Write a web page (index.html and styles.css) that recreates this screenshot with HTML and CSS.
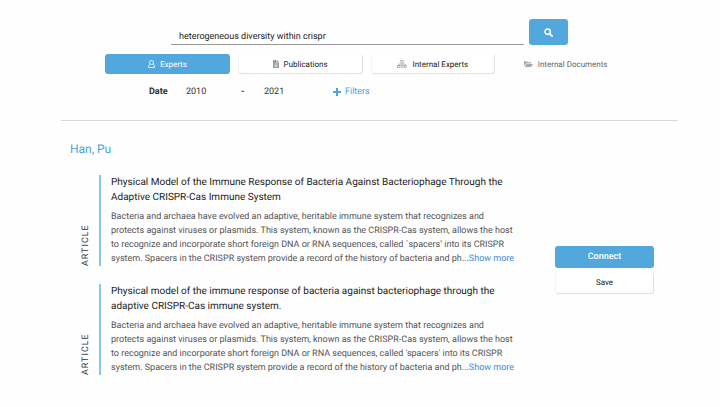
FILE: index.html
```html
<!DOCTYPE html>
<html lang="en">
<head>
    <meta charset="UTF-8">
    <meta name="viewport" content="width=device-width, initial-scale=1.0">
    <title>Expert Search</title>
    <link rel="stylesheet" href="styles.css">
</head>
<body>
    <div class="container">
        <form class="search" id="searchForm">
            <div class="search-bar">
                <input type="text" class="search-input" aria-label="Search" value="heterogeneous diversity within crispr">
                <button type="submit" class="btn btn-primary search-btn" aria-label="Search">
                    <svg width="9" height="9" viewBox="0 0 16 16" fill="none" stroke="#fff" stroke-linecap="round">
                        <circle cx="6.5" cy="6.5" r="4.8" stroke-width="2.8"/>
                        <path d="M10.5 10.5L14.3 14.3" stroke-width="3.2"/>
                    </svg>
                </button>
            </div>

            <div class="tabs">
                <button type="button" class="btn btn-primary tab">
                    <svg width="7" height="8" viewBox="0 0 14 16" fill="none" stroke="#fff" stroke-width="1.6">
                        <circle cx="7" cy="5" r="4"/>
                        <path d="M4.2 8.3C2 9 1 10.8 1 14.8H13C13 10.8 12 9 9.8 8.3"/>
                    </svg>
                    Experts
                </button>
                <button type="button" class="btn btn-outline tab">
                    <svg width="6" height="8" viewBox="0 0 12 16">
                        <path fill="#999" d="M0 0H7V5H12V16H0Z M8 0L12 4H8Z"/>
                        <path stroke="#fff" stroke-width="1.2" d="M3 8H9M3 10.5H9M3 13H9"/>
                    </svg>
                    Publications
                </button>
                <button type="button" class="btn btn-outline tab">
                    <svg width="10" height="8" viewBox="0 0 20 16" fill="none" stroke="#999" stroke-width="1.3">
                        <rect x="7.5" y="1" width="5" height="4"/>
                        <rect x="1" y="11" width="4.5" height="4"/>
                        <rect x="7.8" y="11" width="4.5" height="4"/>
                        <rect x="14.5" y="11" width="4.5" height="4"/>
                        <path d="M10 5V11M3.2 11V8H16.8V11"/>
                    </svg>
                    Internal Experts
                </button>
                <button type="button" class="btn tab tab-disabled">
                    <svg width="9" height="8" viewBox="0 0 18 16" fill="#aaa">
                        <path d="M0 2.5H5.5L7 4.5H14V7H4L0 12Z"/>
                        <path d="M4.6 8H18L14.5 14H1Z"/>
                    </svg>
                    Internal Documents
                </button>
            </div>

            <div class="filters">
                <label class="filters-label" for="dateFrom">Date</label>
                <input type="text" class="year" id="dateFrom" value="2010">
                <span class="dash">-</span>
                <input type="text" class="year" id="dateTo" aria-label="Date to" value="2021">
                <button type="button" class="filters-btn">
                    <svg width="8" height="8" viewBox="0 0 8 8" stroke="#4aa3db" stroke-width="2">
                        <path d="M4 0V8M0 4H8"/>
                    </svg>
                    Filters
                </button>
            </div>
        </form>

        <div class="result">
            <h2 class="result-name">Han, Pu</h2>
            <div class="result-body">
                <div class="articles">
                    <div class="article">
                        <span class="article-type">ARTICLE</span>
                        <div class="article-text">
                            <h3>Physical Model of the Immune Response of Bacteria Against Bacteriophage Through the Adaptive CRISPR-Cas Immune System</h3>
                            <p>Bacteria and archaea have evolved an adaptive, heritable immune system that recognizes and protects against viruses or plasmids. This system, known as the CRISPR-Cas system, allows the host to recognize and incorporate short foreign DNA or RNA sequences, called `spacers’ into its CRISPR system. Spacers in the CRISPR system provide a record of the history of bacteria and ph...<a href="#">Show more</a></p>
                        </div>
                    </div>
                    <div class="article">
                        <span class="article-type">ARTICLE</span>
                        <div class="article-text">
                            <h3>Physical model of the immune response of bacteria against bacteriophage through the adaptive CRISPR-Cas immune system.</h3>
                            <p>Bacteria and archaea have evolved an adaptive, heritable immune system that recognizes and protects against viruses or plasmids. This system, known as the CRISPR-Cas system, allows the host to recognize and incorporate short foreign DNA or RNA sequences, called 'spacers' into its CRISPR system. Spacers in the CRISPR system provide a record of the history of bacteria and ph...<a href="#">Show more</a></p>
                        </div>
                    </div>
                </div>
                <div class="actions">
                    <button type="button" class="btn btn-primary connect">Connect</button>
                    <button type="button" class="btn btn-outline">Save</button>
                </div>
            </div>
        </div>
    </div>
</body>
</html>
```
FILE: styles.css
```css
* {
    box-sizing: border-box;
}

body {
    margin: 0;
    font-family: Roboto, Arial, sans-serif;
    font-size: 9px;
    color: #333;
    background-color: #fefefe;
    text-rendering: geometricPrecision;
}

button,
input {
    font-family: inherit;
    font-size: inherit;
    color: inherit;
    text-rendering: inherit;
    border: none;
    background: none;
    padding: 0;
}

.container {
    margin: 0 42px 0 61px;
}

.search {
    padding: 19px 50px 20px 44px;
    border-bottom: 1px solid #d8d8d8;
}

.search-bar {
    display: flex;
    align-items: flex-end;
    gap: 5px;
    padding: 0 60px 0 66px;
}

.search-input {
    flex: 1;
    min-width: 0;
    height: 18px;
    padding: 3px 8px 0;
    border-bottom: 1px solid #999;
    color: #222;
}

.btn {
    display: flex;
    justify-content: center;
    align-items: center;
    height: 22px;
    border-radius: 3px;
    font-size: 8px;
    cursor: pointer;
}

.btn-primary {
    background: #52a8dd;
    color: #fff;
}

.btn-outline {
    background: #fff;
    border: 1px solid #e0e0e0;
    border-top-color: transparent;
    border-left-color: #f3f3f3;
    color: #222;
}

.search-btn {
    width: 39px;
    height: 26px;
}

.tabs {
    display: grid;
    grid-template-columns: repeat(4, 1fr);
    gap: 8px;
    margin-top: 9px;
}

.tab {
    gap: 5px;
    height: 20px;
}

.tab-disabled {
    color: #666;
}

.filters {
    display: flex;
    align-items: center;
    height: 16px;
    margin-top: 10px;
    padding-left: 44px;
}

.filters-label {
    width: 37px;
    font-weight: 700;
}

.year {
    width: 55px;
}

.dash {
    width: 23px;
    font-weight: 700;
}

.filters-btn {
    display: flex;
    align-items: center;
    gap: 4px;
    margin-left: 14px;
    color: #4aa3db;
    cursor: pointer;
}

.result {
    padding: 20px 24px 20px 9px;
}

.result-name {
    margin: 0 0 18px;
    font-size: 12px;
    line-height: 16px;
    font-weight: 400;
    color: #4aa3db;
}

.result-body {
    display: flex;
    align-items: center;
    gap: 36px;
}

.articles {
    display: flex;
    flex-direction: column;
    gap: 18px;
    flex: 1;
    padding-left: 9px;
}

.article {
    display: flex;
    gap: 6px;
}

.article-type {
    writing-mode: vertical-rl;
    transform: rotate(180deg);
    width: 14px;
    line-height: 14px;
    letter-spacing: 1px;
}

.article-text {
    flex: 1;
    padding-left: 10px;
    border-left: 2px solid #84c8e6;
}

.article h3 {
    margin: 0 0 5px;
    font-size: 10px;
    line-height: 15px;
    font-weight: 400;
    color: #222;
}

.article p {
    margin: 0;
    line-height: 14px;
    color: #555;
}

.article a {
    color: #3f86e0;
    text-decoration: none;
}

.actions {
    display: flex;
    flex-direction: column;
    gap: 4px;
    width: 99px;
    margin-bottom: 11px;
}

.connect {
    font-size: 9px;
    font-weight: 500;
}
```
